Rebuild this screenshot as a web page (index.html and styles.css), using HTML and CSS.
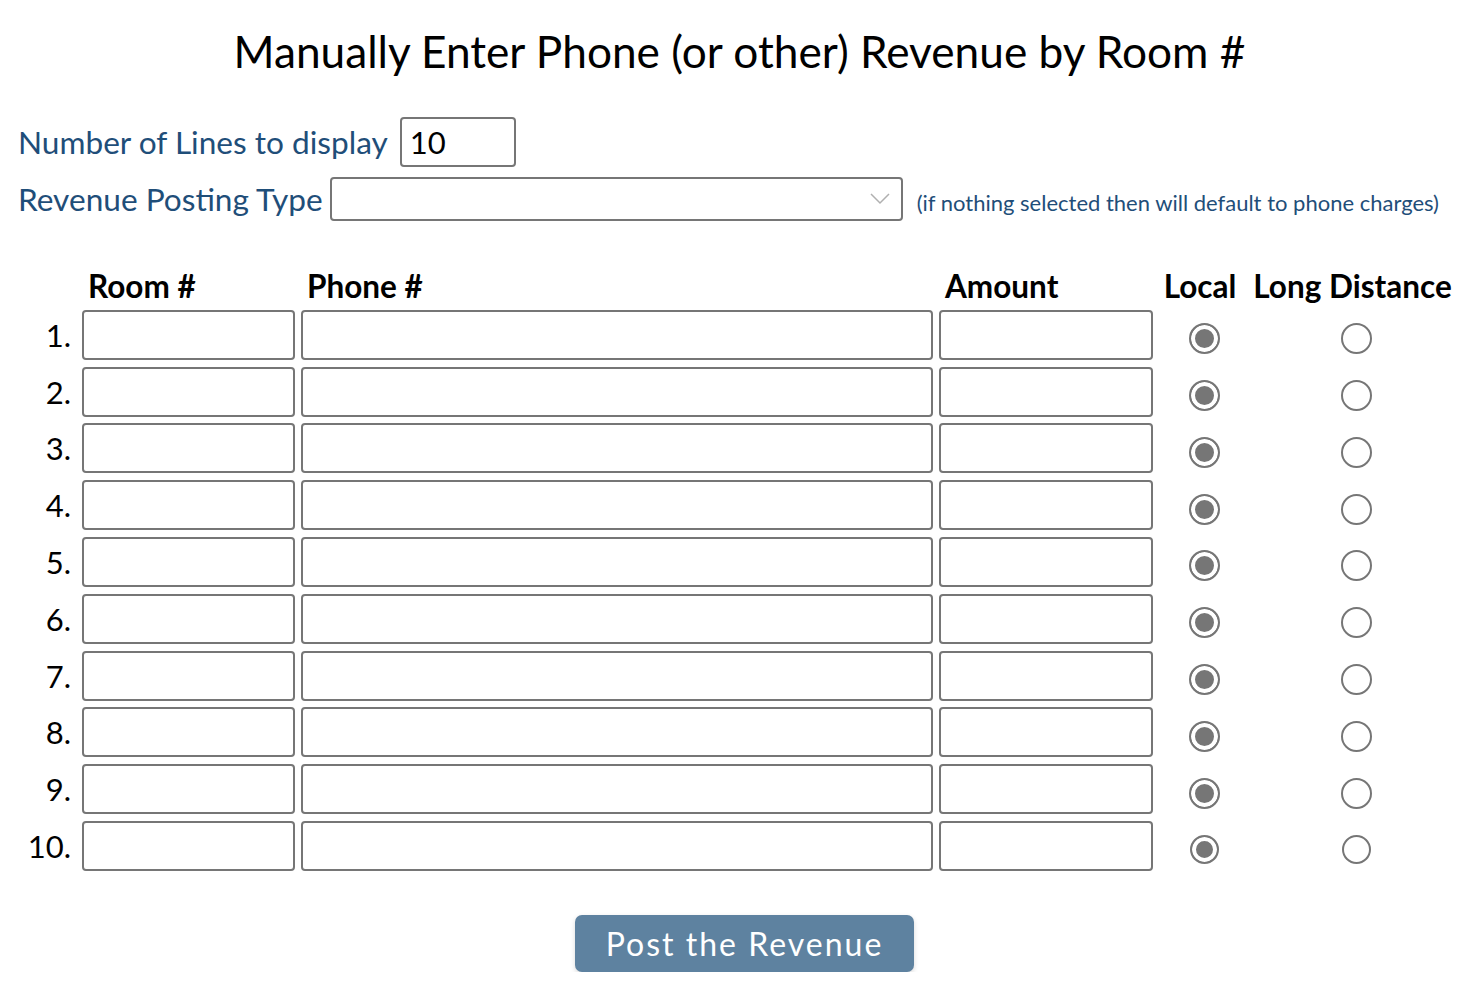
FILE: index.html
```html
<!DOCTYPE html>
<html>
<head>
<meta charset="utf-8">
<title>Manual Revenue</title>
<link rel="stylesheet" href="styles.css">
</head>
<body>
<h1 class="title">Manually Enter Phone (or other) Revenue by Room #</h1>
<div class="settings">
  <div class="setting-row">
    <label class="setting-label">Number of Lines to display</label>
    <input class="lines-input" type="text" value="10">
  </div>
  <div class="setting-row">
    <label class="setting-label">Revenue Posting Type</label>
    <div class="select-box">
      <svg class="chevron" width="20" height="12" viewBox="0 0 20 12"><path d="M1 1 L10 10 L19 1" fill="none" stroke="#b0b0b0" stroke-width="1.5"/></svg>
    </div>
    <span class="note">(if nothing selected then will default to phone charges)</span>
  </div>
</div>
<div class="grid">
  <div class="hd"></div>
  <div class="hd hd-left">Room #</div>
  <div class="hd hd-left">Phone #</div>
  <div class="hd hd-left">Amount</div>
  <div class="hd hd-center">Local</div>
  <div class="hd hd-center">Long Distance</div>

  <div class="num">1.</div><input class="field"><input class="field"><input class="field"><div class="rad"><span class="radio on"></span></div><div class="rad"><span class="radio"></span></div>
  <div class="num">2.</div><input class="field"><input class="field"><input class="field"><div class="rad"><span class="radio on"></span></div><div class="rad"><span class="radio"></span></div>
  <div class="num">3.</div><input class="field"><input class="field"><input class="field"><div class="rad"><span class="radio on"></span></div><div class="rad"><span class="radio"></span></div>
  <div class="num">4.</div><input class="field"><input class="field"><input class="field"><div class="rad"><span class="radio on"></span></div><div class="rad"><span class="radio"></span></div>
  <div class="num">5.</div><input class="field"><input class="field"><input class="field"><div class="rad"><span class="radio on"></span></div><div class="rad"><span class="radio"></span></div>
  <div class="num">6.</div><input class="field"><input class="field"><input class="field"><div class="rad"><span class="radio on"></span></div><div class="rad"><span class="radio"></span></div>
  <div class="num">7.</div><input class="field"><input class="field"><input class="field"><div class="rad"><span class="radio on"></span></div><div class="rad"><span class="radio"></span></div>
  <div class="num">8.</div><input class="field"><input class="field"><input class="field"><div class="rad"><span class="radio on"></span></div><div class="rad"><span class="radio"></span></div>
  <div class="num">9.</div><input class="field"><input class="field"><input class="field"><div class="rad"><span class="radio on"></span></div><div class="rad"><span class="radio"></span></div>
  <div class="num">10.</div><input class="field"><input class="field"><input class="field"><div class="rad"><span class="radio on small"></span></div><div class="rad"><span class="radio small"></span></div>
</div>
<div class="actions">
  <button class="post-btn">Post the Revenue</button>
</div>
</body>
</html>
```
FILE: styles.css
```css
html, body {
  margin: 0;
  padding: 0;
  background: #fff;
  font-family: Lato, "Liberation Sans", sans-serif;
  color: #000;
}
.title {
  margin: 0;
  padding-top: 23px;
  height: 58px;
  font-weight: 400;
  font-size: 44.2px;
  line-height: 56px;
  text-align: center;
  padding-right: 4px;
}
.settings {
  margin-top: 36px;
  padding-left: 18px;
}
.setting-row {
  display: flex;
  align-items: center;
}
.setting-row + .setting-row {
  margin-top: 10px;
}
.setting-label {
  font-size: 31.6px;
  color: #1f4e79;
  line-height: 40px;
}
.lines-input {
  box-sizing: border-box;
  margin-left: 12px;
  width: 116px;
  height: 50px;
  border: 2px solid #767676;
  border-radius: 4px;
  font-family: Lato, sans-serif;
  font-size: 31px;
  padding: 0 0 0 8px;
  color: #000;
  outline: none;
}
.select-box {
  box-sizing: border-box;
  margin-left: 7px;
  width: 573px;
  height: 44px;
  border: 2px solid #767676;
  border-radius: 4px;
  display: flex;
  align-items: center;
  justify-content: flex-end;
  padding-right: 11px;
}
.chevron {
  display: block;
}
.note {
  margin-left: 14px;
  margin-top: 6px;
  font-size: 22px;
  color: #1f4e79;
}
.grid {
  display: grid;
  grid-template-columns: 76px 213px 632px 214px 82px 211px;
  column-gap: 6px;
  row-gap: 6.8px;
  margin-top: 48px;
  align-items: center;
}
.hd {
  font-weight: 700;
  font-size: 31.5px;
  line-height: 34px;
  white-space: nowrap;
}
.hd-left {
  padding-left: 6px;
}
.hd-center {
  text-align: center;
}
.num {
  text-align: right;
  padding-right: 5px;
  font-size: 31px;
}
.field {
  box-sizing: border-box;
  height: 50px;
  width: 100%;
  border: 2px solid #767676;
  border-radius: 4px;
  margin: 0;
  outline: none;
  background: #fff;
}
.rad {
  display: flex;
  justify-content: center;
  align-items: center;
  padding-left: 8px;
  padding-top: 8px;
}
.radio {
  box-sizing: border-box;
  display: block;
  width: 31px;
  height: 31px;
  border: 2.5px solid #767676;
  border-radius: 50%;
  background: #fff;
}
.radio.on {
  background: #767676;
  box-shadow: inset 0 0 0 4px #fff;
}
.radio.small {
  width: 29px;
  height: 29px;
}
.actions {
  display: flex;
  justify-content: center;
  margin-top: 44px;
  padding-left: 6px;
}
.post-btn {
  width: 339px;
  height: 57px;
  background: #5e82a0;
  border: none;
  border-radius: 7px;
  color: #fff;
  font-family: Lato, sans-serif;
  font-size: 32px;
  letter-spacing: 2px;
  box-shadow: 0 2px 5px rgba(0,0,0,0.15);
  padding: 0 0 0 0;
}
```
